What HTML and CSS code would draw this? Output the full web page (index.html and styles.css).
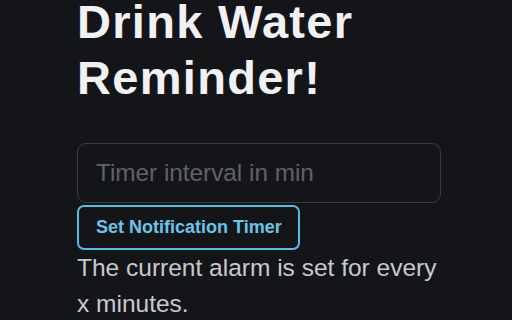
FILE: index.html
```html
<!DOCTYPE html>
<html lang="en">
<head>
<meta charset="utf-8">
<title>Drink Water Reminder!</title>
<link rel="stylesheet" href="styles.css">
</head>
<body>
<main class="app">
  <h1 class="title">Drink Water Reminder!</h1>
  <input class="interval" type="number" placeholder="Timer interval in min">
  <button class="set-btn" type="button">Set Notification Timer</button>
  <p class="status">The current alarm is set for every x minutes.</p>
</main>
</body>
</html>
```
FILE: styles.css
```css
html, body {
  margin: 0;
  padding: 0;
  background: #141519;
  height: 100%;
  overflow: hidden;
}

body {
  font-family: "Liberation Sans", Arial, Helvetica, sans-serif;
}

.app {
  display: flex;
  flex-direction: column;
  align-items: flex-start;
  width: 364px;
  padding-left: 77px;
}

.title {
  margin: -6px 0 0;
  font-size: 47px;
  line-height: 56px;
  font-weight: 700;
  letter-spacing: 1.3px;
  color: #f1f1f3;
}

.interval {
  box-sizing: border-box;
  margin-top: 37px;
  width: 364px;
  height: 60px;
  padding: 0 18px;
  border: 1px solid #3a3c41;
  border-radius: 9px;
  background: #141519;
  color: #e0e0e4;
  font-family: "Liberation Sans", Arial, sans-serif;
  font-size: 24.3px;
  outline: none;
}

.interval::placeholder {
  color: #616267;
}

.interval::-webkit-outer-spin-button,
.interval::-webkit-inner-spin-button {
  -webkit-appearance: none;
  margin: 0;
}

.set-btn {
  box-sizing: border-box;
  margin-top: 2px;
  height: 45px;
  padding: 0 16px 0 17px;
  border: 2px solid #58bbdf;
  border-radius: 7px;
  background: #141519;
  color: #6ac5e8;
  font-family: "Liberation Sans", Arial, sans-serif;
  font-size: 18px;
  font-weight: 700;
  cursor: pointer;
}

.status {
  margin: 0;
  font-size: 24.5px;
  line-height: 36px;
  color: #c8c9ce;
}
```
